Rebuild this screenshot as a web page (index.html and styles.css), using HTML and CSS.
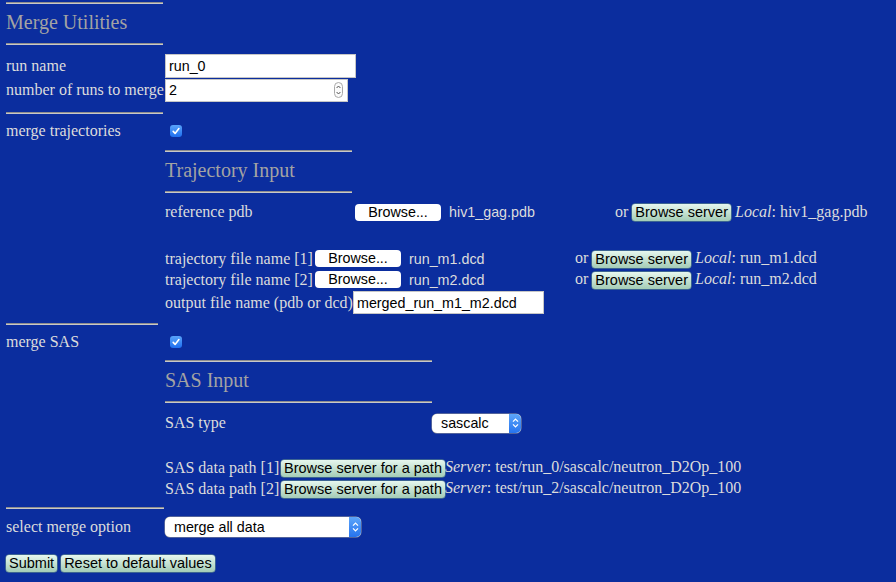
FILE: index.html
```html
<!DOCTYPE html>
<html>
<head>
<meta charset="utf-8">
<title>Merge Utilities</title>
<link rel="stylesheet" href="styles.css">
</head>
<body>
<div class="page">
  <div class="rule rule-top"></div>
  <h3 class="title">Merge Utilities</h3>
  <div class="rule rule-top"></div>

  <div class="row row-run">
    <span class="label main-label">run name</span>
    <input class="textbox tb-run" type="text" value="run_0">
  </div>
  <div class="row row-num">
    <span class="label main-label">number of runs to merge</span>
    <div class="numbox">
      <input class="numinput" type="text" value="2">
      <svg class="spin" width="9" height="16" viewBox="0 0 9 16"><rect x="0.5" y="0.5" width="8" height="15" rx="4" fill="#fbfbfb" stroke="#a8a8a8"/><path d="M2.6 6 L4.5 4 L6.4 6" fill="none" stroke="#555" stroke-width="1"/><path d="M2.6 10 L4.5 12 L6.4 10" fill="none" stroke="#555" stroke-width="1"/></svg>
    </div>
  </div>

  <div class="rule rule-top sp-10"></div>
  <div class="row row-check">
    <span class="label main-label">merge trajectories</span>
    <svg class="check" width="12" height="12" viewBox="0 0 12 12"><defs><linearGradient id="cg1" x1="0" y1="0" x2="0" y2="1"><stop offset="0" stop-color="#5aa4fa"/><stop offset="1" stop-color="#1e6ff0"/></linearGradient></defs><rect x="0" y="0" width="12" height="12" rx="3" fill="url(#cg1)"/><path d="M3.2 6.4 L5.1 8.4 L8.9 3.6" fill="none" stroke="#fff" stroke-width="1.6" stroke-linecap="round" stroke-linejoin="round"/></svg>
  </div>

  <div class="sub sub-traj">
    <div class="rule rule-traj"></div>
    <h3 class="title">Trajectory Input</h3>
    <div class="rule rule-traj"></div>

    <div class="row row-ref">
      <span class="label l-ref">reference pdb</span>
      <span class="filecell"><button class="browse">Browse...</button><span class="fname">hiv1_gag.pdb</span></span>
      <span class="orcell">or <button class="srv">Browse server</button> <i>Local</i>: hiv1_gag.pdb</span>
    </div>

    <div class="row row-t1">
      <span class="label l-traj">trajectory file name [1]</span>
      <span class="filecell"><button class="browse">Browse...</button><span class="fname">run_m1.dcd</span></span>
      <span class="orcell">or <button class="srv">Browse server</button> <i>Local</i>: run_m1.dcd</span>
    </div>
    <div class="row row-t2">
      <span class="label l-traj">trajectory file name [2]</span>
      <span class="filecell"><button class="browse">Browse...</button><span class="fname">run_m2.dcd</span></span>
      <span class="orcell">or <button class="srv">Browse server</button> <i>Local</i>: run_m2.dcd</span>
    </div>
    <div class="row row-out">
      <span class="label l-out">output file name (pdb or dcd)</span>
      <input class="textbox tb-out" type="text" value="merged_run_m1_m2.dcd">
    </div>
  </div>

  <div class="rule rule-mid sp-8"></div>
  <div class="row row-check">
    <span class="label main-label">merge SAS</span>
    <svg class="check" width="12" height="12" viewBox="0 0 12 12"><defs><linearGradient id="cg2" x1="0" y1="0" x2="0" y2="1"><stop offset="0" stop-color="#5aa4fa"/><stop offset="1" stop-color="#1e6ff0"/></linearGradient></defs><rect x="0" y="0" width="12" height="12" rx="3" fill="url(#cg2)"/><path d="M3.2 6.4 L5.1 8.4 L8.9 3.6" fill="none" stroke="#fff" stroke-width="1.6" stroke-linecap="round" stroke-linejoin="round"/></svg>
  </div>

  <div class="sub sub-sas">
    <div class="rule rule-sas"></div>
    <h3 class="title">SAS Input</h3>
    <div class="rule rule-sas"></div>

    <div class="row row-sastype">
      <span class="label l-sastype">SAS type</span>
      <div class="selectbox sel-sas">
        <select class="sel"><option>sascalc</option></select>
        <span class="arrow"><svg width="7" height="12" viewBox="0 0 7 12"><path d="M1 4.6 L3.5 2.1 L6 4.6" fill="none" stroke="#fff" stroke-width="1.3"/><path d="M1 7.4 L3.5 9.9 L6 7.4" fill="none" stroke="#fff" stroke-width="1.3"/></svg></span>
      </div>
    </div>

    <div class="row row-p1">
      <span class="label l-path">SAS data path [1]</span>
      <span class="pathcell"><button class="srv">Browse server for a path</button><i>Server</i>: test/run_0/sascalc/neutron_D2Op_100</span>
    </div>
    <div class="row row-p2">
      <span class="label l-path">SAS data path [2]</span>
      <span class="pathcell"><button class="srv">Browse server for a path</button><i>Server</i>: test/run_2/sascalc/neutron_D2Op_100</span>
    </div>
  </div>

  <div class="rule rule-end sp-8"></div>
  <div class="row row-opt">
    <span class="label main-label">select merge option</span>
    <div class="selectbox sel-opt">
      <select class="sel"><option>merge all data</option></select>
      <span class="arrow"><svg width="7" height="12" viewBox="0 0 7 12"><path d="M1 4.6 L3.5 2.1 L6 4.6" fill="none" stroke="#fff" stroke-width="1.3"/><path d="M1 7.4 L3.5 9.9 L6 7.4" fill="none" stroke="#fff" stroke-width="1.3"/></svg></span>
    </div>
  </div>

  <div class="row row-buttons">
    <button class="srv">Submit</button>
    <button class="srv">Reset to default values</button>
  </div>
</div>
</body>
</html>
```

FILE: styles.css
```css
* { box-sizing: border-box; }
html, body { margin: 0; padding: 0; }
body {
  background: #0b2d9e;
  color: #dcdcdc;
  font-family: "Liberation Serif", "Times New Roman", serif;
  font-size: 16px;
  width: 896px;
  height: 582px;
  overflow: hidden;
}
.page { padding: 2px 0 0 6px; }

.rule {
  height: 2px;
  border-top: 1px solid #8e8e8e;
  border-bottom: 1px solid #c8c8c8;
}
.rule-top { width: 157px; }
.rule-mid { width: 152px; }
.rule-end { width: 158px; }
.rule-traj { width: 187px; }
.rule-sas { width: 267px; }
.sp-10 { margin-top: 10px; }
.sp-8 { margin-top: 8px; }

.title {
  margin: 0;
  height: 39px;
  line-height: 37px;
  font-size: 20px;
  font-weight: normal;
  color: #a3a3a3;
}

.row { display: flex; align-items: center; white-space: nowrap; }
.label { flex: none; }
.main-label { width: 159px; }

.row-run { margin-top: 9px; height: 24px; }
.row-num { height: 24px; }
.row-check { margin-top: 6px; height: 22px; }
.row-check .check { margin-left: 5px; }

.textbox {
  background: #fff;
  border: 1px solid #c6c6c6;
  border-radius: 0;
  font-family: "Liberation Sans", Arial, sans-serif;
  font-size: 14.3px;
  color: #000;
  padding: 0 3px;
  outline: none;
}
.tb-run { width: 191px; height: 24px; }
.tb-out { width: 191px; height: 23px; }

.numbox {
  display: flex;
  align-items: center;
  width: 183px;
  height: 23px;
  background: #fff;
  border: 1px solid #c6c6c6;
  padding: 0 4px 0 3px;
}
.numinput {
  flex: 1;
  min-width: 0;
  border: 0;
  padding: 0;
  outline: none;
  background: transparent;
  font-family: "Liberation Sans", Arial, sans-serif;
  font-size: 14.3px;
  color: #000;
}

.sub { margin-left: 159px; }
.sub-traj { margin-top: 8px; }
.sub-sas { margin-top: 7px; }

.row-ref { margin-top: 9px; height: 20px; }
.row-t1 { margin-top: 26px; height: 21px; }
.row-t2 { height: 21px; }
.row-out { height: 25px; }
.l-ref { width: 190px; }
.l-traj { width: 150px; }
.l-out { width: 188px; }

.filecell { display: flex; align-items: center; width: 260px; flex: none; }
.browse {
  width: 86px;
  height: 17px;
  padding: 0;
  border: 0;
  border-radius: 4px;
  background: #fff;
  color: #000;
  font-family: "Liberation Sans", Arial, sans-serif;
  font-size: 14.3px;
  line-height: 17px;
}
.fname {
  margin-left: 8px;
  font-family: "Liberation Sans", Arial, sans-serif;
  font-size: 14.3px;
  color: #dcdcdc;
}
.orcell, .pathcell { display: block; white-space: nowrap; }

.srv {
  height: 17px;
  padding: 0 3px;
  border: 0;
  border-radius: 3px;
  background: linear-gradient(#e6f7ee, #a4ccb6);
  box-shadow: 0 0 0 0.5px #6f9c86;
  color: #000;
  font-family: "Liberation Sans", Arial, sans-serif;
  font-size: 14.5px;
  line-height: 17px;
  vertical-align: middle;
}

.row-sastype { margin-top: 10px; height: 20px; }
.l-sastype { width: 267px; }
.row-p1 { margin-top: 24px; height: 21px; }
.row-p2 { height: 21px; }
.l-path { width: 116px; }

.selectbox {
  display: flex;
  height: 20px;
  background: #fff;
  border-radius: 5px;
  overflow: hidden;
  box-shadow: 0 0 0 0.5px #9a9a9a;
}
.sel-sas { width: 89px; height: 19px; }
.sel-opt { width: 196px; }
.sel {
  flex: 1;
  min-width: 0;
  -webkit-appearance: none;
  appearance: none;
  border: 0;
  background: transparent;
  padding: 0 0 0 9px;
  font-family: "Liberation Sans", Arial, sans-serif;
  font-size: 14.3px;
  color: #000;
  outline: none;
}
.arrow {
  width: 12px;
  flex: none;
  display: flex;
  align-items: center;
  justify-content: center;
  background: linear-gradient(#5da6fa, #2673ee);
}

.row-opt { margin-top: 8px; height: 20px; }
.row-buttons { margin-top: 18px; gap: 4px; }
```
